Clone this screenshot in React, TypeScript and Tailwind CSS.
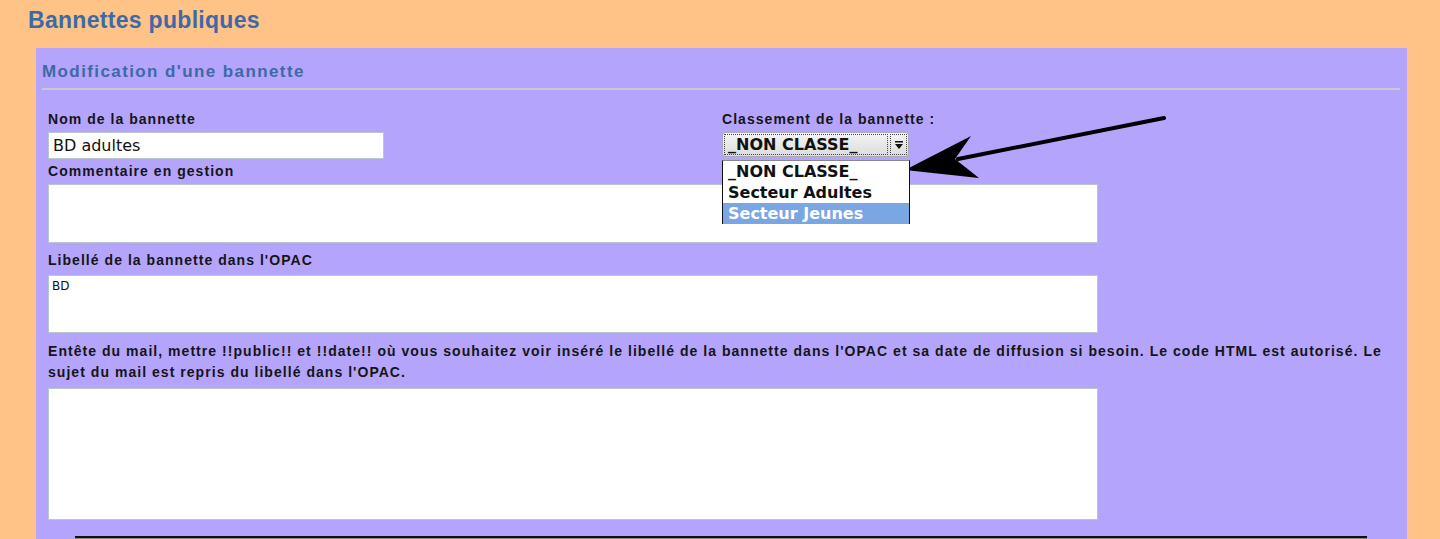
export default function App() {
  const label = "font-['Liberation_Sans',Arial,sans-serif] font-bold text-[14px] leading-[18px] tracking-[1.04px] text-[#151515]";
  const box = "block bg-white border border-[#bcc6cf] box-border";

  return (
    <div className="relative min-h-[539px] h-[539px] overflow-hidden bg-[#ffc387]">
      {/* Page title */}
      <div className="h-[48px] pt-[6px] pl-[28px]">
        <h1 className="font-['Liberation_Sans',Arial,sans-serif] font-bold text-[23px] leading-[28px] tracking-[0.3px] text-[#3e69a6]">
          Bannettes publiques
        </h1>
      </div>

      {/* Panel */}
      <div className="ml-[36px] mr-[33px] bg-[#b4a4fc] pt-[12px] pl-[6px] pr-[7px] h-[491px]">
        <h2 className="font-['Liberation_Sans',Arial,sans-serif] font-bold text-[17px] leading-[24px] tracking-[1.4px] text-[#3e69a6]">
          Modification d'une bannette
        </h2>
        <div className="mt-[4px] h-[2px] bg-[#c9c9d6]" />

        <div className="pl-[6px]">
          {/* first row: name + classement */}
          <div className="flex mt-[20px]">
            <div className="w-[674px]">
              <div className={label}>Nom de la bannette</div>
              <div className={`${box} mt-[4px] w-[336px] h-[27px] pl-[4px] font-['DejaVu_Sans',sans-serif] text-[16px] leading-[25px] text-[#111]`}>
                BD adultes
              </div>
            </div>
            <div className="relative">
              <div className={label}>Classement de la bannette :</div>
              <Select />
            </div>
          </div>

          <div className={`${label} mt-[3px]`}>Commentaire en gestion</div>
          <div className={`${box} mt-[4px] w-[1050px] h-[59px]`} />

          <div className={`${label} mt-[8px]`}>Libellé de la bannette dans l'OPAC</div>
          <div className={`${box} mt-[6px] w-[1050px] h-[58px] pl-[3px] pt-[3px] font-['DejaVu_Sans',sans-serif] text-[12px] leading-[14px] text-[#111]`}>
            BD
          </div>

          <div className={`${label} mt-[8px] leading-[21px] whitespace-nowrap`}>
            Entête du mail, mettre !!public!! et !!date!! où vous souhaitez voir inséré le libellé de la bannette dans l'OPAC et sa date de diffusion si besoin. Le code HTML est autorisé. Le
            <br />
            sujet du mail est repris du libellé dans l'OPAC.
          </div>
          <div className={`${box} mt-[5px] w-[1050px] h-[132px]`} />

          <div className="mt-[16px] ml-[27px] w-[1292px] border-t-2 border-[#111] border-b border-b-[#888]" />
        </div>
      </div>

      {/* annotation arrow */}
      <svg className="absolute inset-0 pointer-events-none" width="1440" height="539" viewBox="0 0 1440 539">
        <line x1="1164" y1="118" x2="958" y2="159" stroke="#000" strokeWidth="4" strokeLinecap="round" />
        <polygon points="905,170 971,136 955,159 979,178" fill="#000" />
      </svg>
    </div>
  );
}

function Select() {
  const opt = "h-[21px] pl-[5px] font-['DejaVu_Sans',sans-serif] font-bold text-[16px] leading-[21px] whitespace-nowrap";
  return (
    <>
      <div className="mt-[4px] w-[187px] h-[25px] flex rounded-[3px] border border-[#a9adb3] bg-gradient-to-b from-[#f4f4f4] to-[#dcdcdc] p-[1px] gap-[2px]">
        <div className="flex-1 border border-dotted border-[#444] pl-[3px] font-['DejaVu_Sans',sans-serif] font-bold text-[16px] leading-[19px] text-[#111] whitespace-nowrap overflow-hidden">
          _NON CLASSE_
        </div>
        <div className="w-[17px] border border-dotted border-[#444] flex items-center justify-center">
          <svg width="10" height="10" viewBox="0 0 10 10">
            <rect x="1" y="1" width="8" height="1.5" fill="#111" />
            <polygon points="1,4 9,4 5,9" fill="#111" />
          </svg>
        </div>
      </div>
      <div className="absolute left-0 top-[50px] w-[188px] h-[64px] bg-white border border-[#111] border-t-[#888] z-10">
        <div className={`${opt} text-[#111]`}>_NON CLASSE_</div>
        <div className={`${opt} text-[#111]`}>Secteur Adultes</div>
        <div className={`${opt} bg-[#7ba6e4] text-white`}>Secteur Jeunes</div>
      </div>
    </>
  );
}
